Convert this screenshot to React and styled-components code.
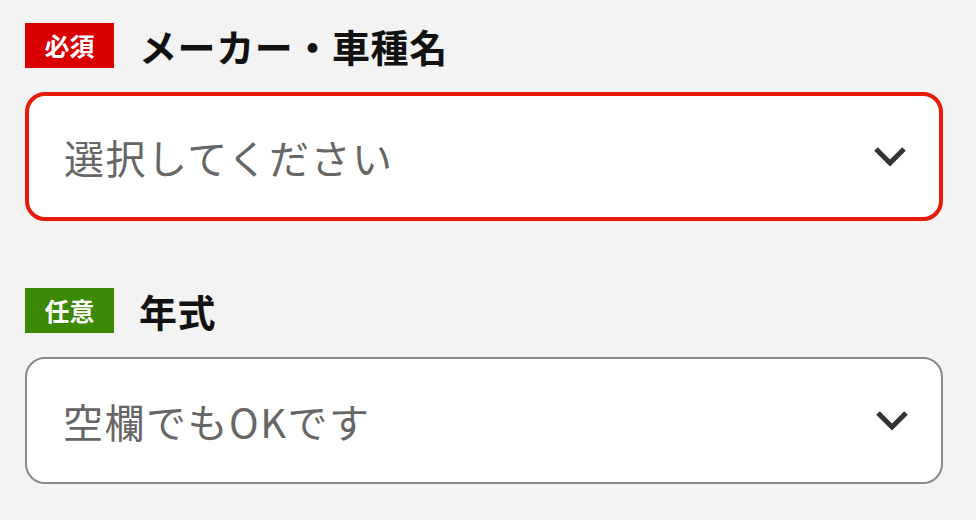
import React from 'react';
import styled, { createGlobalStyle } from 'styled-components'

const GlobalStyle = createGlobalStyle`
    html, body {
        margin: 0;
        background: #f3f3f3;
    }
    body {
        font-family: "Noto Sans CJK JP", "Noto Sans", sans-serif;
    }
`

const Page = styled.div`
    display: flex;
    flex-direction: column;
    gap: 67px;
    padding: 23px 33px 0 25px;
`

const Field = styled.div`
    display: flex;
    flex-direction: column;
    gap: 24px;
`

const Header = styled.div`
    display: flex;
    align-items: center;
    gap: 25px;
`

const Badge = styled.span`
    display: flex;
    align-items: center;
    justify-content: center;
    width: 89px;
    height: 45px;
    background: ${p => p.$required ? '#d80000' : '#3b8904'};
    color: #fff;
    font-size: 25px;
    font-weight: bold;
    line-height: 1;
`

const Label = styled.span`
    font-size: 38px;
    font-weight: bold;
    letter-spacing: 0.6px;
    color: #111;
    line-height: 1;
`

const Select = styled.div`
    box-sizing: border-box;
    display: flex;
    align-items: center;
    justify-content: space-between;
    height: ${p => p.$error ? '129px' : '127px'};
    padding: 0 32px 0 ${p => p.$error ? '35px' : '36px'};
    background: #fff;
    border: ${p => p.$error ? '4px solid #e81a0c' : '2px solid #8a8a8a'};
    border-radius: 20px;
`

const Placeholder = styled.span`
    font-size: 40px;
    letter-spacing: 1.5px;
    color: #666;
    line-height: 1;
`

const Chevron = () => (
    <svg width="34" height="22" viewBox="0 0 34 22">
        <path d="M3 3 L17 17 L31 3" fill="none" stroke="#333" strokeWidth="5"/>
    </svg>
)

const fields = [
    { required: true, label: 'メーカー・車種名', placeholder: '選択してください', error: true },
    { required: false, label: '年式', placeholder: '空欄でもOKです', error: false },
]

const App = () => {
    return (
        <>
            <GlobalStyle/>
            <Page>
                {fields.map(f => (
                    <Field key={f.label}>
                        <Header>
                            <Badge $required={f.required}>{f.required ? '必須' : '任意'}</Badge>
                            <Label>{f.label}</Label>
                        </Header>
                        <Select $error={f.error}>
                            <Placeholder>{f.placeholder}</Placeholder>
                            <Chevron/>
                        </Select>
                    </Field>
                ))}
            </Page>
        </>
    );
}

export default App;
